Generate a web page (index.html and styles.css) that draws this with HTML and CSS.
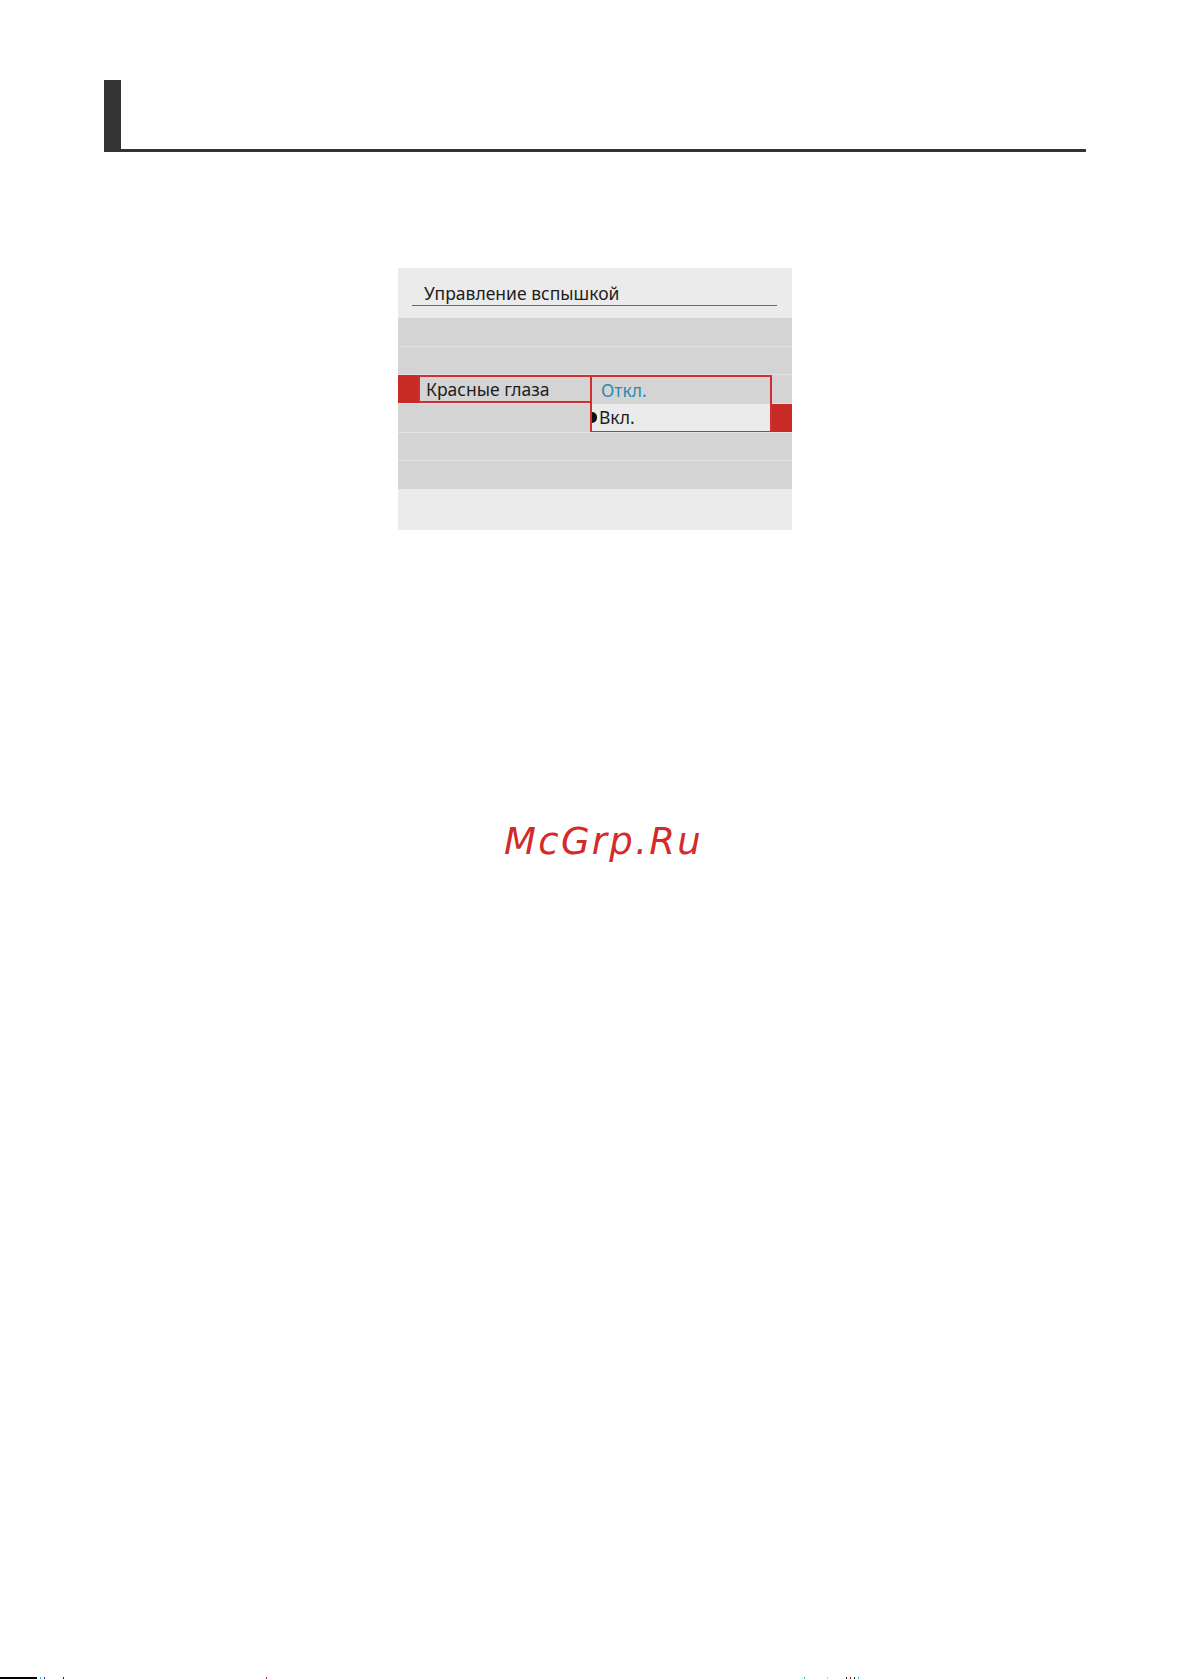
FILE: index.html
```html
<!DOCTYPE html>
<html lang="ru">
<head>
  <meta charset="utf-8" />
  <title>Управление вспышкой</title>
  <link rel="stylesheet" href="styles.css">
</head>
<body>

<div class="page">
  <div class="chapter"></div>

  <div class="screen">
    <div class="screen-title"><span>Управление вспышкой</span></div>

    <div class="rows">
      <div class="row"></div>
      <div class="row"></div>
      <div class="row row-active">
        <div class="mark"></div>
        <div class="label">Красные глаза</div>
        <!-- dropdown with the two choices, drawn over rows 3 and 4 -->
        <ul class="choices">
          <li class="choice">Откл.</li>
          <li class="choice chosen"><span class="dot"></span>Вкл.</li>
        </ul>
      </div>
      <div class="row row-below">
        <div class="tab"></div>
      </div>
      <div class="row"></div>
      <div class="row"></div>
    </div>
  </div>

  <div class="stamp">McGrp.Ru</div>

  <div class="edge">
    <span class="rule"></span>
    <span class="px cyan"></span>
    <span class="px blue"></span>
    <span class="px dark gap1"></span>
    <span class="px red gap2"></span>
    <span class="px cyan gap3"></span>
    <span class="px yellow gap4"></span>
    <span class="px dark gap5"></span>
    <span class="px red"></span>
    <span class="px dark"></span>
    <span class="px cyan"></span>
  </div>
</div>

</body>
</html>
```

FILE: styles.css
```css
body {
  margin: 0;
  background: #fff;
  font-family: "Noto Sans", "DejaVu Sans", sans-serif;
}

.page {
  height: 1679px;
  display: flex;
  flex-direction: column;
}

/* chapter heading: thick bar on the left, rule underneath */
.chapter {
  margin: 80px 0 0 104px;
  width: 965px;
  height: 69px;
  border-left: 17px solid #333;
  border-bottom: 3px solid #333;
}

/* camera menu screen */
.screen {
  align-self: center;
  margin: 116px 0 0 -2px;
  width: 394px;
  height: 262px;
  background: #ebebeb;
  color: #1e1e1e;
  font-size: 17.5px;
}

.screen-title {
  height: 50px;
  padding: 0 15px 0 14px;
  box-sizing: border-box;
}

.screen-title span {
  display: block;
  padding: 15px 0 0 12px;
  height: 38px;
  box-sizing: border-box;
  border-bottom: 1px solid #d33a3a;
  line-height: 20px;
}

.rows {
  display: flex;
  flex-direction: column;
  gap: 1px;
  background: #e2e2e2;
}

.row {
  height: 27.7px;
  background: #d4d4d4;
  display: flex;
}

.row-active {
  position: relative;
  z-index: 1;
}

.mark {
  width: 20px;
  background: #c82a26;
}

.label {
  width: 172px;
  box-sizing: border-box;
  border: 2px solid #cf2f2f;
  border-right: 0;
  padding-left: 6px;
  line-height: 25px;
}

.choices {
  list-style: none;
  margin: 0;
  padding: 0;
  position: absolute;
  left: 192px;
  top: 0;
  width: 182px;
  height: 56.5px;
  box-sizing: border-box;
  border: 2px solid #cf2f2f;
  display: flex;
  flex-direction: column;
}

.choice {
  flex: 1;
  background: #d4d4d4;
  color: #2a8bae;
  padding-left: 9px;
  line-height: 27px;
}

.choice.chosen {
  background: #ebebeb;
  color: #1e1e1e;
  padding-left: 0;
  display: flex;
  align-items: center;
}

.dot {
  width: 5px;
  height: 11px;
  margin-right: 2px;
  background: #111;
  border-radius: 0 6px 6px 0;
}

.row-below {
  justify-content: flex-end;
}

.tab {
  width: 20px;
  background: #c82a26;
}

/* site stamp */
.stamp {
  margin: 290px 0 0 15px;
  align-self: center;
  font-family: "DejaVu Sans", sans-serif;
  font-style: oblique;
  font-size: 37px;
  letter-spacing: 2.3px;
  color: #d42a2a;
  line-height: 44px;
}

/* scan artefacts along the bottom edge */
.edge {
  margin-top: auto;
  height: 2px;
  display: flex;
  align-items: flex-start;
}

.rule {
  width: 37px;
  height: 2px;
  background: #000;
}

.px {
  width: 1px;
  height: 2px;
  margin-left: 3px;
}

.cyan { background: #1fc8d8; }
.blue { background: #2030e0; }
.dark { background: #222; }
.red { background: #c02020; }
.yellow { background: #e0d040; }

.gap1 { margin-left: 18px; }
.gap2 { margin-left: 202px; }
.gap3 { margin-left: 537px; }
.gap4 { margin-left: 22px; }
.gap5 { margin-left: 18px; }
```
